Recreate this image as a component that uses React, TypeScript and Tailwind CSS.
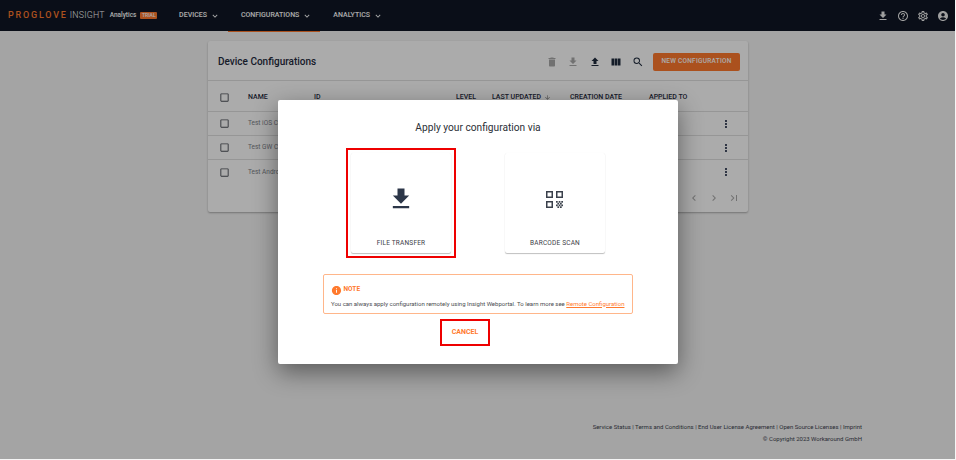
import {
  MdAccountCircle,
  MdArrowDownward,
  MdCheckBoxOutlineBlank,
  MdChevronLeft,
  MdChevronRight,
  MdDelete,
  MdFileDownload,
  MdFileUpload,
  MdHelpOutline,
  MdInfo,
  MdKeyboardArrowDown,
  MdLastPage,
  MdMoreVert,
  MdOutlineSettings,
  MdSearch,
  MdViewColumn,
} from 'react-icons/md';

const font = { fontFamily: 'Roboto, "Liberation Sans", sans-serif' };
const rowGrid = 'grid grid-cols-[40px_66px_142px_36px_78px_79px_71px_1fr] items-center';

function NavItem({ label, active }: { label: string; active?: boolean }) {
  return (
    <div className={`flex h-full items-center gap-[3px] pr-[8px] pl-[13px] ${active ? 'shadow-[0_1px_0_#ff7a2e]' : ''}`}>
      <span className="text-[7px] font-medium text-white">{label}</span>
      <MdKeyboardArrowDown className="h-[10px] w-[10px] text-white" />
    </div>
  );
}

function Check() {
  return (
    <div className="pl-[10.5px]">
      <MdCheckBoxOutlineBlank className="h-[11px] w-[11px] text-[#4b4f56]" />
    </div>
  );
}

function TableRow({ name, last }: { name: string; last?: boolean }) {
  return (
    <div className={`${rowGrid} h-[24px] ${last ? '' : 'border-b border-[#e0e0e0]'}`}>
      <Check />
      <span className="pt-[1px] text-[6.5px] text-[#7d8188] whitespace-nowrap">{name}</span>
      <span />
      <span />
      <span />
      <span />
      <span />
      <MdMoreVert className="h-[12px] w-[12px] text-[#1f2b46]" />
    </div>
  );
}

function Tile({ label, children }: { label: string; children: React.ReactNode }) {
  return (
    <div className="flex h-[100px] w-[100px] flex-col items-center rounded-[2px] bg-white shadow-[0_1px_1px_rgba(0,0,0,0.25),0_0_1px_rgba(0,0,0,0.06)]">
      <div className="flex h-[77px] w-full items-center justify-center pt-[15px]">{children}</div>
      <span className="mt-[9px] text-[6.5px] tracking-[0.2px] text-[#3e4249]">{label}</span>
    </div>
  );
}

function QrIcon() {
  return (
    <svg viewBox="0 0 17 17" className="mr-[1px] h-[17px] w-[17px] text-[#3a404b]" fill="none" stroke="currentColor" strokeWidth="1.5">
      <rect x="0.75" y="0.75" width="5.5" height="5.5" />
      <rect x="10.75" y="0.75" width="5.5" height="5.5" />
      <rect x="0.75" y="10.75" width="5.5" height="5.5" />
      <g fill="currentColor" stroke="none">
        <rect x="10" y="10" width="1.7" height="1.7" />
        <rect x="12.7" y="10" width="1.7" height="1.7" />
        <rect x="15.3" y="10" width="1.7" height="1.7" />
        <rect x="11.4" y="11.8" width="1.7" height="1.7" />
        <rect x="14" y="11.8" width="1.7" height="1.7" />
        <rect x="10" y="13.5" width="1.7" height="1.7" />
        <rect x="12.7" y="13.5" width="1.7" height="1.7" />
        <rect x="15.3" y="13.5" width="1.7" height="1.7" />
        <rect x="11.4" y="15.3" width="1.7" height="1.7" />
        <rect x="14" y="15.3" width="1.7" height="1.7" />
      </g>
    </svg>
  );
}

export default function App() {
  return (
    <div className="relative h-[460px] w-[956px] overflow-hidden bg-[#f5f5f5]" style={font}>
      <div className="flex h-[459px] w-[955px] flex-col">
        <header className="flex h-[31px] shrink-0 items-center bg-[#0f1624] pl-[8px]">
          <span className="text-[9px] font-medium tracking-[1.8px] text-[#ff7a2e]">PROGLOVE</span>
          <span className="ml-[2px] text-[8.8px] font-light tracking-[0.2px] text-white">INSIGHT</span>
          <span className="ml-[5px] text-[6.5px] font-medium text-white">Analytics</span>
          <span className="ml-[4px] rounded-[1px] bg-[#ff7a2e] px-[1.5px] text-[5px] leading-[7px] font-medium text-white">TRIAL</span>
          <div className="ml-[9px] flex h-full">
            <NavItem label="DEVICES" />
            <NavItem label="CONFIGURATIONS" active />
            <NavItem label="ANALYTICS" />
          </div>
          <div className="ml-auto flex items-center gap-[8px] pr-[6px] text-[#eeeeee]">
            <MdFileDownload className="h-[12px] w-[12px]" />
            <MdHelpOutline className="h-[12px] w-[12px]" />
            <MdOutlineSettings className="h-[12px] w-[12px]" />
            <MdAccountCircle className="h-[12px] w-[12px]" />
          </div>
        </header>

        <main className="flex min-h-0 flex-1 flex-col pl-[1px]">
          <section className="mx-auto mt-[10px] w-[540px] rounded-[2px] bg-white shadow-[0_1px_2px_rgba(0,0,0,0.3)]">
            <div className="flex h-[40px] items-center border-b border-[#e0e0e0] pt-[2px] pr-[8px] pl-[10px]">
              <h1 className="text-[10px] font-medium text-[#1f2b3d]">Device Configurations</h1>
              <div className="ml-auto flex items-center gap-[9.5px]">
                <MdDelete className="h-[12px] w-[12px] text-[#a9a9a9]" />
                <MdFileDownload className="h-[12px] w-[12px] text-[#a9a9a9]" />
                <MdFileUpload className="h-[12px] w-[12px] text-[#1f2b3d]" />
                <MdViewColumn className="h-[12px] w-[12px] text-[#1f2b3d]" />
                <MdSearch className="h-[12px] w-[12px] text-[#1f2b3d]" />
                <button className="h-[18px] w-[87px] rounded-[2px] bg-[#ff7a2e] text-[6.5px] font-medium tracking-[0.25px] text-white">
                  NEW CONFIGURATION
                </button>
              </div>
            </div>
            <div className={`${rowGrid} h-[31px] border-b border-[#e0e0e0] pt-[2px] text-[7px] font-medium text-[#1f2b3d]`}>
              <Check />
              <span>NAME</span>
              <span>ID</span>
              <span>LEVEL</span>
              <span className="flex items-center gap-[3px] whitespace-nowrap">
                LAST UPDATED
                <MdArrowDownward className="h-[7px] w-[7px] text-[#777]" />
              </span>
              <span className="whitespace-nowrap">CREATION DATE</span>
              <span className="whitespace-nowrap">APPLIED TO</span>
            </div>
            <TableRow name="Test iOS Configuration" />
            <TableRow name="Test GW Configuration" />
            <TableRow name="Test Android" last />
            <div className="flex h-[28px] items-center justify-end gap-[8px] pr-[8px] text-[#a9a9a9]">
              <MdChevronLeft className="h-[12px] w-[12px]" />
              <MdChevronRight className="h-[12px] w-[12px]" />
              <MdLastPage className="h-[12px] w-[12px]" />
            </div>
          </section>

          <footer className="mt-auto pr-[93px] pb-[15px] text-right text-[6px] leading-[11.5px] text-[#3e4450]">
            <p>Service Status | Terms and Conditions | End User License Agreement | Open Source Licenses | Imprint</p>
            <p>© Copyright 2023 Workaround GmbH</p>
          </footer>
        </main>
      </div>

      {/* dimmed backdrop and dialog */}
      <div className="absolute top-0 left-0 flex h-[459px] w-[955px] items-start justify-center bg-black/33 pt-[100px] pl-[1px]">
        <div className="flex h-[264px] w-[400px] flex-col items-center rounded-[2px] bg-white shadow-[0_8px_24px_rgba(0,0,0,0.45)]">
          <h2 className="mt-[21px] text-[10.2px] leading-[14px] text-[#2b2f36]">Apply your configuration via</h2>
          <div className="mt-[13px] flex w-full items-center pl-[68px]">
            <div className="border-2 border-[#ee0000] p-[3px]">
              <Tile label="FILE TRANSFER">
                <MdFileDownload className="h-[28px] w-[28px] text-[#2c3648]" />
              </Tile>
            </div>
            <div className="ml-[49px]">
              <Tile label="BARCODE SCAN">
                <QrIcon />
              </Tile>
            </div>
          </div>
          <div className="mt-[16px] flex h-[40px] w-[310px] flex-col justify-center gap-[3px] rounded-[2px] border border-[#ffb68a] px-[7px] pt-[4px]">
            <div className="flex items-center gap-[1.5px]">
              <MdInfo className="h-[11px] w-[11px] text-[#ff7a2e]" />
              <span className="text-[6.5px] font-bold text-[#ff7a2e]">NOTE</span>
            </div>
            <p className="text-[6px] whitespace-nowrap text-[#4a4d52]">
              You can always apply configuration remotely using Insight Webportal. To learn more see{' '}
              <span className="text-[#ff7a2e] underline">Remote Configuration</span>
            </p>
          </div>
          <button className="mt-[5px] mr-[26px] h-[27px] w-[50px] border-2 border-[#ee0000] text-[7px] font-bold text-[#ff7a2e]">
            CANCEL
          </button>
        </div>
      </div>
    </div>
  );
}
